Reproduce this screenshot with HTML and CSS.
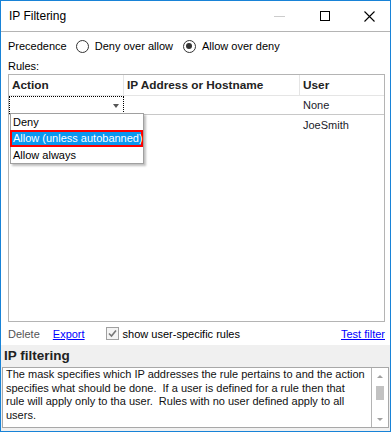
FILE: index.html
```html
<!DOCTYPE html>
<html lang="en">
  <head>
    <meta charset="UTF-8" />
    <title>IP Filtering</title>
    <link rel="stylesheet" href="styles.css">
  </head>
  <body>
    <div class="window">
      <div class="titlebar">
        <span class="title">IP Filtering</span>
        <div class="controls">
          <span class="ctl ctl-min">
            <svg width="11" height="1" viewBox="0 0 11 1"><rect width="11" height="1" fill="#cccccc" /></svg>
          </span>
          <span class="ctl ctl-max">
            <svg width="10" height="10" viewBox="0 0 10 10"><rect x="0.5" y="0.5" width="9" height="9" fill="none" stroke="#000" /></svg>
          </span>
          <span class="ctl ctl-close">
            <svg width="11" height="11" viewBox="0 0 11 11"><path d="M0.5 0.5 L10.5 10.5 M10.5 0.5 L0.5 10.5" stroke="#000" stroke-width="1.1" /></svg>
          </span>
        </div>
      </div>

      <div class="client">
        <!-- precedence -->
        <div class="precedence">
          <span>Precedence</span>
          <label class="radio first"><span class="circle"></span>Deny over allow</label>
          <label class="radio"><span class="circle checked"></span>Allow over deny</label>
        </div>

        <div class="rules-label">Rules:</div>

        <!-- rules grid -->
        <div class="grid">
          <div class="grid-row head">
            <div class="cell">Action</div>
            <div class="cell">IP Address or Hostname</div>
            <div class="cell last">User</div>
          </div>
          <div class="grid-row line">
            <div class="cell combo"><span class="arrow"></span></div>
            <div class="cell"></div>
            <div class="cell">None</div>
          </div>
          <div class="grid-row">
            <div class="cell"></div>
            <div class="cell"></div>
            <div class="cell">JoeSmith</div>
          </div>

          <div class="dropdown">
            <div class="item">Deny</div>
            <div class="item selected">Allow (unless autobanned)</div>
            <div class="item">Allow always</div>
          </div>
        </div>

        <!-- actions -->
        <div class="actions">
          <span class="disabled">Delete</span>
          <a href="#" class="link export">Export</a>
          <label class="check">
            <span class="box">
              <svg width="11" height="11" viewBox="0 0 11 11"><path d="M2 5.5 L4.5 8 L9 2.5" fill="none" stroke="#777" stroke-width="1.6" /></svg>
            </span>
            show user-specific rules
          </label>
          <a href="#" class="link test">Test filter</a>
        </div>

        <!-- help -->
        <div class="help">
          <div class="help-title">IP filtering</div>
          <div class="help-box">
            <div class="help-text">
              The mask specifies which IP addresses the rule pertains to and the action<br>
              specifies what should be done.&nbsp; If a user is defined for a rule then that<br>
              rule will apply only to tha user.&nbsp; Rules with no user defined apply to all<br>
              users.
            </div>
            <div class="scrollbar">
              <div class="sb-btn"><span class="up"></span></div>
              <div class="sb-track"><div class="thumb"></div></div>
              <div class="sb-btn"><span class="down"></span></div>
            </div>
          </div>
        </div>
      </div>
    </div>
  </body>
</html>
```

FILE: styles.css
```css
body {
  margin: 0;
  font-family: "Liberation Sans", Arial, sans-serif;
  font-size: 11px;
  color: #000;
}
.window {
  width: 391px;
  height: 432px;
  box-sizing: border-box;
  border: 1px solid #1883d7;
  background-color: #fff;
  display: flex;
  flex-direction: column;
}
.titlebar {
  height: 30px;
  display: flex;
  align-items: center;
  padding-left: 8px;
  flex-shrink: 0;
}
.title {
  font-size: 12px;
}
.controls {
  margin-left: auto;
  display: flex;
  height: 100%;
}
.ctl {
  width: 46px;
  display: flex;
  align-items: center;
  justify-content: center;
}
.ctl-close {
  width: 42px;
}
.client {
  flex: 1;
  border-top: 1px solid #b4b4b4;
  padding: 4px 5px 0 7px;
  display: flex;
  flex-direction: column;
  min-height: 0;
}
.precedence {
  height: 20px;
  display: flex;
  align-items: center;
}
.radio {
  display: flex;
  align-items: center;
  margin-left: 10px;
}
.radio.first {
  margin-left: 9px;
}
.circle {
  width: 13px;
  height: 13px;
  box-sizing: border-box;
  border: 1px solid #333;
  border-radius: 50%;
  margin-right: 6px;
  display: flex;
  align-items: center;
  justify-content: center;
}
.circle.checked::after {
  content: "";
  width: 6px;
  height: 6px;
  border-radius: 50%;
  background-color: #333;
}
.rules-label {
  height: 16px;
  line-height: 16px;
  padding-top: 2px;
}
.grid {
  position: relative;
  height: 248px;
  box-sizing: border-box;
  border: 1px solid #b4b4b4;
  flex-shrink: 0;
}
.grid-row {
  display: grid;
  grid-template-columns: 115px 176px 1fr;
  height: 19px;
  box-sizing: border-box;
  color: #1a1a2a;
}
.grid-row.head {
  height: 21px;
  border-bottom: 1px solid #e5e5e5;
  font-weight: bold;
  font-size: 11.8px;
  color: #222;
}
.grid-row.head .cell {
  border-right: 1px solid #e5e5e5;
}
.grid-row.head .cell.last {
  border-right: none;
}
.grid-row.line {
  border-bottom: 1px solid #c8c8c8;
}
.cell {
  box-sizing: border-box;
  padding-left: 3px;
  display: flex;
  align-items: center;
}
.combo {
  border: 1px dotted #000;
  border-bottom: none;
  position: relative;
}
.arrow {
  position: absolute;
  right: 4px;
  top: 7px;
  border-left: 3px solid transparent;
  border-right: 3px solid transparent;
  border-top: 4px solid #555;
}
.dropdown {
  position: absolute;
  left: 1px;
  top: 38px;
  width: 134px;
  box-sizing: border-box;
  border: 1px solid #a0a0a0;
  background-color: #fff;
  box-shadow: 2px 2px 2px rgba(0, 0, 0, 0.25);
}
.item {
  height: 16px;
  line-height: 16px;
  padding-left: 2px;
  box-sizing: border-box;
  white-space: nowrap;
}
.item.selected {
  height: 17px;
  line-height: 13px;
  margin-left: -1px;
  border: 2px solid #ff0000;
  padding-left: 1px;
  background-color: #0a97f0;
  color: #fff;
}
.actions {
  height: 23px;
  display: flex;
  align-items: center;
  flex-shrink: 0;
}
.disabled {
  color: #555;
}
.link {
  color: #0000ff;
  text-decoration: underline;
}
.export {
  margin-left: 13px;
}
.check {
  display: flex;
  align-items: center;
  margin-left: 21px;
}
.box {
  width: 13px;
  height: 13px;
  box-sizing: border-box;
  border: 1px solid #a0a0a0;
  background-color: #f4f4f4;
  margin-right: 4px;
  display: flex;
  align-items: center;
  justify-content: center;
}
.test {
  margin-left: auto;
}
.help {
  flex: 1;
  margin: 0 -5px 0 -7px;
  background-color: #f0f0f0;
  padding: 0 1px 3px 1px;
  display: flex;
  flex-direction: column;
}
.help-title {
  height: 22px;
  line-height: 22px;
  padding-left: 2px;
  font-weight: bold;
  font-size: 13.5px;
  color: #222;
}
.help-box {
  flex: 1;
  display: flex;
  border: 1px solid #a8a8a8;
  background-color: #fff;
}
.help-text {
  flex: 1;
  padding: 0 0 0 3px;
  line-height: 13.5px;
  color: #111;
  white-space: nowrap;
  overflow: hidden;
}
.scrollbar {
  width: 16px;
  border-left: 1px solid #b4b4b4;
  display: flex;
  flex-direction: column;
}
.sb-btn {
  height: 16px;
  display: flex;
  align-items: center;
  justify-content: center;
}
.up {
  border-left: 3px solid transparent;
  border-right: 3px solid transparent;
  border-bottom: 3px solid #a0a0a0;
}
.down {
  border-left: 3px solid transparent;
  border-right: 3px solid transparent;
  border-top: 3px solid #a0a0a0;
}
.sb-track {
  flex: 1;
  display: flex;
  justify-content: center;
}
.thumb {
  width: 8px;
  height: 14px;
  margin-top: 2px;
  background-color: #c2c2c2;
}
```
